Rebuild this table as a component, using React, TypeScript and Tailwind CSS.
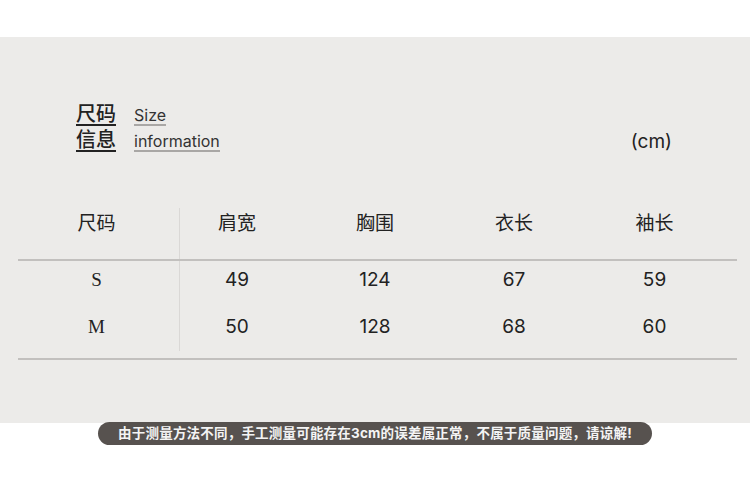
import React from 'react';

const rows = [
  { size: 'S', vals: ['49', '124', '67', '59'] },
  { size: 'M', vals: ['50', '128', '68', '60'] },
];

const headers = ['肩宽', '胸围', '衣长', '袖长'];
const colW = ['w-[114px]', 'w-[162px]', 'w-[116px]', 'w-[165px]'];

export default function App() {
  return (
    <div
      className="w-[750px] h-[490px] bg-white pt-[37px] text-[#222]"
      style={{ fontFamily: 'Inter, "Noto Sans CJK SC", sans-serif' }}
    >
      <div className="h-[386px] bg-[#ecebe9] pt-[65px]">
        {/* title */}
        <div className="flex items-end justify-between pl-[76px] pr-[78px] h-[50px]">
          <div className="grid grid-cols-[auto_auto] gap-x-[18px] gap-y-[4px] items-end">
            <span className="text-[20px] leading-[20px] font-medium border-b-2 border-[#222] w-fit">尺码</span>
            <span className="text-[16px] leading-[18px] border-b-2 border-[#a9a7a5] w-fit text-[#333]">Size</span>
            <span className="text-[20px] leading-[20px] font-medium border-b-2 border-[#222] w-fit">信息</span>
            <span className="text-[16px] leading-[18px] border-b-2 border-[#a9a7a5] w-fit text-[#333]">information</span>
          </div>
          <span className="text-[19px] leading-[24px] -mb-[2px]">(cm)</span>
        </div>

        {/* table */}
        <div className="mt-[56px] ml-[18px] w-[719px]">
          <div className="flex h-[51px] text-[19px] leading-[24px]">
            <div className="w-[162px] pr-[4px] pt-[4px] text-center border-r border-[#dad8d6]">尺码</div>
            {headers.map((h, i) => (
              <div key={h} className={`${colW[i]} pt-[4px] text-center`}>{h}</div>
            ))}
          </div>
          <div className="h-[2px] bg-[#c2c0be]" />
          {rows.map((r, ri) => (
            <div key={r.size} className={`flex ${ri === 0 ? 'h-[47px]' : 'h-[43px]'} text-[19px] leading-[24px]`}>
              <div
                className="w-[162px] pr-[4px] pt-[7px] text-center border-r border-[#dad8d6]"
                style={{ fontFamily: '"Liberation Serif", serif' }}
              >
                {r.size}
              </div>
              {r.vals.map((v, i) => (
                <div key={i} className={`${colW[i]} pt-[7px] text-center`}>{v}</div>
              ))}
            </div>
          ))}
          <div className="h-[7px]" />
          <div className="h-[2px] bg-[#c2c0be]" />
        </div>
      </div>

      {/* note pill */}
      <div className="flex justify-center -mt-[1px]">
        <div className="w-[554px] h-[23px] rounded-full bg-[#57524f] flex items-center justify-center text-[13.5px] font-bold tracking-[0.2px] text-[#f4f4f4]">
          由于测量方法不同，手工测量可能存在3cm的误差属正常，不属于质量问题，请谅解!
        </div>
      </div>
    </div>
  );
}
